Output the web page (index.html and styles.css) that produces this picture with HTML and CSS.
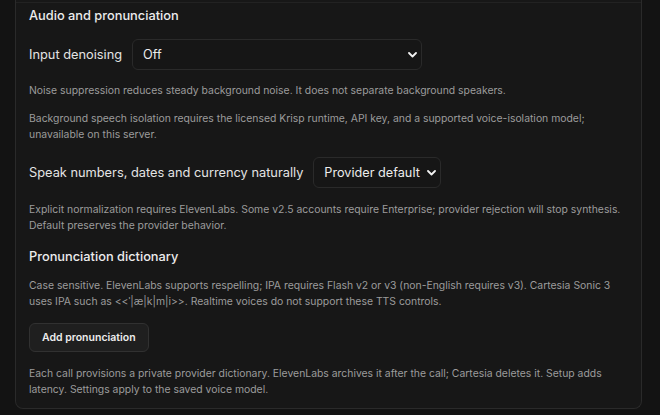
FILE: index.html
```html
<!DOCTYPE html>
<html lang="en">
<head>
<meta charset="utf-8">
<title>Audio and pronunciation</title>
<link rel="stylesheet" href="styles.css">
</head>
<body>
<div class="page">
  <section class="card">
    <div class="divider"></div>
    <h2 class="heading">Audio and pronunciation</h2>
    <div class="row row-first">
      <span class="label">Input denoising</span>
      <div class="select select-wide">
        <span>Off</span>
        <svg class="chev" width="9" height="6" viewBox="0 0 9 6"><path d="M1 1l3.5 3.5L8 1" fill="none" stroke="#f2f2f2" stroke-width="1.8" stroke-linecap="round" stroke-linejoin="round"/></svg>
      </div>
    </div>
    <p class="help help-a">Noise suppression reduces steady background noise. It does not separate background speakers.</p>
    <p class="help help-b">Background speech isolation requires the licensed Krisp runtime, API key, and a supported voice-isolation model; unavailable on this server.</p>
    <div class="row row-second">
      <span class="label">Speak numbers, dates and currency naturally</span>
      <div class="select">
        <span>Provider default</span>
        <svg class="chev" width="9" height="6" viewBox="0 0 9 6"><path d="M1 1l3.5 3.5L8 1" fill="none" stroke="#f2f2f2" stroke-width="1.8" stroke-linecap="round" stroke-linejoin="round"/></svg>
      </div>
    </div>
    <p class="help help-c">Explicit normalization requires ElevenLabs. Some v2.5 accounts require Enterprise; provider rejection will stop synthesis. Default preserves the provider behavior.</p>
    <h3 class="heading heading-sub">Pronunciation dictionary</h3>
    <p class="help help-d">Case sensitive. ElevenLabs supports respelling; IPA requires Flash v2 or v3 (non-English requires v3). Cartesia Sonic 3 uses IPA such as &lt;&lt;ˈ|æ|k|m|i&gt;&gt;. Realtime voices do not support these TTS controls.</p>
    <button class="btn" type="button">Add pronunciation</button>
    <p class="help help-e">Each call provisions a private provider dictionary. ElevenLabs archives it after the call; Cartesia deletes it. Setup adds latency. Settings apply to the saved voice model.</p>
  </section>
</div>
</body>
</html>
```

FILE: styles.css
```css
html, body {
  margin: 0;
  padding: 0;
  background: #131313;
}
body {
  font-family: Inter, "Noto Sans", "Liberation Sans", sans-serif;
  color: #e6e6e6;
}
.page {
  padding: 0 18px 6px 15px;
}
.card {
  border: 1px solid #2a2a2a;
  border-top: none;
  border-radius: 0 0 8px 8px;
  background: #171717;
  padding: 0 13px 10px 13px;
  display: flex;
  flex-direction: column;
  align-items: flex-start;
}
.divider {
  align-self: stretch;
  margin: 2px -13px 0 -13px;
  border-top: 1px solid #222222;
}
.heading {
  margin: 3px 0 0 0;
  font-size: 12.8px;
  line-height: 20px;
  font-weight: 500;
  color: #ececec;
}
.heading-sub {
  margin-top: 13px;
}
.row {
  display: flex;
  align-items: center;
  gap: 10px;
}
.row-first { margin-top: 13px; }
.row-second { margin-top: 14px; }
.label {
  font-size: 12.8px;
  line-height: 20px;
  color: #e4e4e4;
}
.select {
  box-sizing: border-box;
  height: 31px;
  display: flex;
  align-items: center;
  justify-content: space-between;
  gap: 7px;
  padding: 0 4px 0 10px;
  border: 1px solid #2a2a2a;
  border-radius: 6px;
  background: #161616;
  font-size: 12.7px;
  color: #ececec;
}
.select-wide {
  width: 290px;
}
.chev {
  display: block;
}
.help {
  margin: 0;
  font-size: 10.4px;
  line-height: 16px;
  color: #9c9c9c;
}
.help-a { margin-top: 13px; }
.help-b { margin-top: 12px; }
.help-c { margin-top: 14px; }
.help-d { margin-top: 11px; }
.help-e { margin-top: 14px; }
.btn {
  margin-top: 13px;
  box-sizing: border-box;
  height: 29px;
  padding: 0 12px;
  border: 1px solid #313131;
  border-radius: 6px;
  background: #1f1f1f;
  color: #ececec;
  font-family: inherit;
  font-size: 10.5px;
  font-weight: 600;
}
```
